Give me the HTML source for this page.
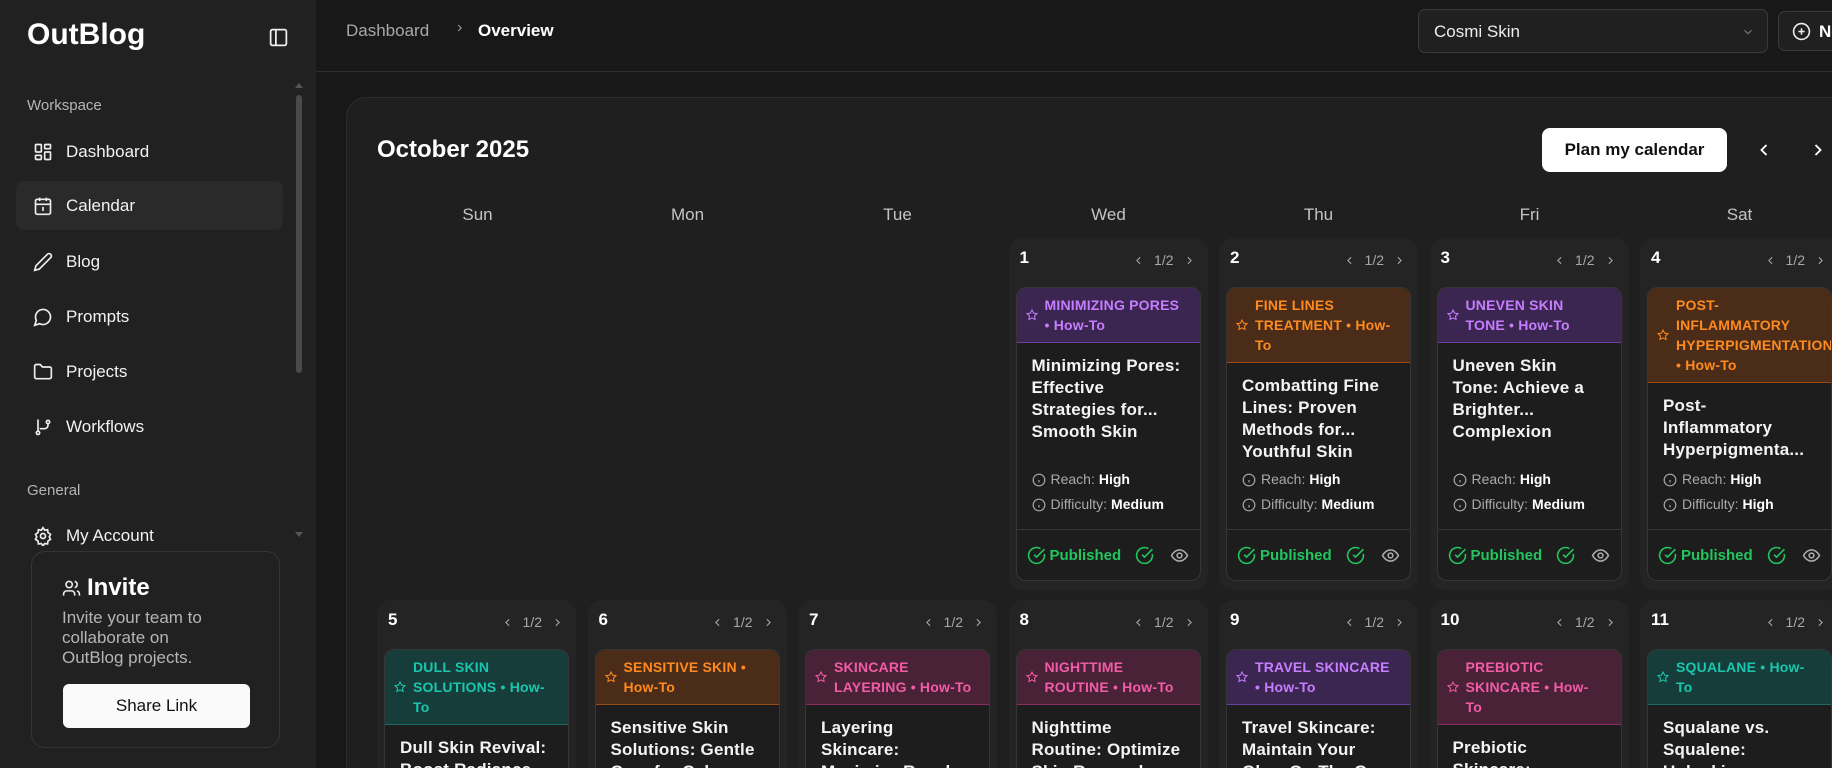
<!DOCTYPE html>
<html><head><meta charset="utf-8"><style>
*{box-sizing:border-box;margin:0;padding:0}
html{width:1832px;height:768px;overflow:hidden}
body{width:1832px;height:768px;overflow:hidden;background:#181818;font-family:"Liberation Sans",sans-serif;color:#fff;position:relative}
.side{position:absolute;left:0;top:0;width:316px;height:768px;background:#212121}
.logo{position:absolute;left:27px;top:18px;font-size:30px;font-weight:700}
.sec{position:absolute;left:27px;font-size:15px;color:#b5b5b5}
.nav{position:absolute;left:16px;width:267px;height:49px;display:flex;align-items:center;padding-left:17px;font-size:17px;color:#f2f2f2}
.nav svg{margin-right:13px}
.nav.act{background:#2a2a2a;border-radius:8px}
.invite{position:absolute;left:31px;top:551px;width:249px;height:197px;border:1px solid #353535;border-radius:14px;background:#212121}
.hdr{position:absolute;left:316px;top:0;right:0;height:72px;border-bottom:1px solid #2e2e2e}
.cal{position:absolute;left:346px;top:97px;width:1520px;height:700px;background:#1f1f1f;border:1px solid #2c2c2c;border-radius:20px}
.dow{position:absolute;top:205px;font-size:17px;color:#c4c4c4;width:199px;text-align:center}
.cell{position:absolute;width:199px;height:352px;background:#242424;border-radius:14px}
.num{position:absolute;left:11px;top:10px;font-size:17px;font-weight:700}
.pg{position:absolute;right:12px;top:14px;font-size:14px;color:#a8a8a8;display:flex;align-items:center;gap:9px}
.card{position:absolute;left:7px;top:49px;width:185px;height:294px;border:1px solid #363636;border-radius:10px;background:#1d1d1d;display:flex;flex-direction:column;overflow:hidden}
.ch{position:relative;padding:7px 0 7px 28px;font-size:14px;line-height:20px;font-weight:700;border-bottom:1px solid;white-space:nowrap;letter-spacing:.2px}
.ch svg{position:absolute;left:9px;top:50%;margin-top:-6px}
.body{flex:1;display:flex;flex-direction:column;justify-content:space-between;padding:12px 0 12px 15px}
.t{font-size:17px;line-height:22px;font-weight:700;color:#f4f4f4;white-space:nowrap;letter-spacing:.2px}
.m{font-size:14px;line-height:25px;color:#aaa;display:flex;align-items:center}
.m b{color:#fff;margin-left:4px}
.m svg{margin-right:5px}
.ft{height:51px;border-top:1px solid #363636;display:flex;align-items:center;padding-left:10px;font-size:15px;font-weight:700;color:#22c55e}
.pu{background:#3b2651;color:#c77dff;border-color:#6b3fa0}
.or{background:#4a2c18;color:#ff8a1f;border-color:#9a4a14}
.te{background:#173d3b;color:#18c7ad;border-color:#1d6a66}
.pk{background:#4a2237;color:#f25ba6;border-color:#8a2d5e}
</style></head><body>
<div class="side">
<div class="logo">OutBlog</div>
<svg style="position:absolute;left:268px;top:27px" width="21" height="21" viewBox="0 0 24 24" fill="none" stroke="#eee" stroke-width="2"><rect x="3" y="3" width="18" height="18" rx="2"/><path d="M9 3v18"/></svg>
<div style="position:absolute;left:296px;top:95px;width:6px;height:278px;background:#4a4a4a;border-radius:3px"></div>
<div style="position:absolute;left:295px;top:79px;border:4px solid transparent;border-bottom:5px solid #555;"></div>
<div style="position:absolute;left:295px;top:532px;border:4px solid transparent;border-top:5px solid #555;"></div>
<div class="sec" style="top:97px">Workspace</div>
<div class="nav" style="top:127px"><svg width="20" height="20" viewBox="0 0 24 24" fill="none" stroke="#eee" stroke-width="2"><rect x="3" y="3" width="7" height="9" rx="1"/><rect x="14" y="3" width="7" height="5" rx="1"/><rect x="14" y="12" width="7" height="9" rx="1"/><rect x="3" y="16" width="7" height="5" rx="1"/></svg>Dashboard</div>
<div class="nav act" style="top:181px"><svg width="20" height="20" viewBox="0 0 24 24" fill="none" stroke="#eee" stroke-width="2"><rect x="3" y="4" width="18" height="18" rx="2"/><path d="M16 2v4M8 2v4M3 10h18M11 14h1v4"/></svg>Calendar</div>
<div class="nav" style="top:237px"><svg width="20" height="20" viewBox="0 0 24 24" fill="none" stroke="#eee" stroke-width="2"><path d="M17 3a2.85 2.85 0 1 1 4 4L7.5 20.5 2 22l1.5-5.5Z"/></svg>Blog</div>
<div class="nav" style="top:292px"><svg width="20" height="20" viewBox="0 0 24 24" fill="none" stroke="#eee" stroke-width="2"><path d="M7.9 20A9 9 0 1 0 4 16.1L2 22Z"/></svg>Prompts</div>
<div class="nav" style="top:347px"><svg width="20" height="20" viewBox="0 0 24 24" fill="none" stroke="#eee" stroke-width="2"><path d="M20 20a2 2 0 0 0 2-2V8a2 2 0 0 0-2-2h-7.9a2 2 0 0 1-1.69-.9L9.6 3.9A2 2 0 0 0 7.93 3H4a2 2 0 0 0-2 2v13a2 2 0 0 0 2 2Z"/></svg>Projects</div>
<div class="nav" style="top:402px"><svg width="20" height="20" viewBox="0 0 24 24" fill="none" stroke="#eee" stroke-width="2"><circle cx="6" cy="19" r="2"/><circle cx="18" cy="6" r="2"/><path d="M6 3v14M18 8v2a4 4 0 0 1-4 4H8"/></svg>Workflows</div>
<div class="sec" style="top:482px">General</div>
<div class="nav" style="top:511px;height:40px;overflow:hidden;align-items:flex-start;padding-top:15px"><svg width="20" height="20" viewBox="0 0 24 24" fill="none" stroke="#eee" stroke-width="2"><circle cx="12" cy="12" r="3"/><path d="M12 2l2 3 3.5-.5.5 3.5 3 2-1.5 3 1.5 3-3 2-.5 3.5-3.5-.5-2 3-2-3-3.5.5-.5-3.5-3-2 1.5-3L3 10l3-2 .5-3.5L10 5Z"/></svg>My Account</div>
<div class="invite">
<svg style="position:absolute;left:30px;top:27px" width="19" height="19" viewBox="0 0 24 24" fill="none" stroke="#eee" stroke-width="2"><path d="M16 21v-2a4 4 0 0 0-4-4H6a4 4 0 0 0-4 4v2"/><circle cx="9" cy="7" r="4"/><path d="M22 21v-2a4 4 0 0 0-3-3.9M16 3.1a4 4 0 0 1 0 7.8"/></svg>
<div style="position:absolute;left:55px;top:22px;font-size:24px;font-weight:700">Invite</div>
<div style="position:absolute;left:30px;top:56px;width:175px;font-size:17px;line-height:20px;color:#b5b5b5">Invite your team to<br>collaborate on<br>OutBlog projects.</div>
<div style="position:absolute;left:31px;top:132px;width:187px;height:44px;background:#fafafa;border-radius:6px;color:#111;font-size:17px;display:flex;align-items:center;justify-content:center">Share Link</div>
</div>
</div>
<div class="hdr">
<div style="position:absolute;left:30px;top:21px;font-size:17px;color:#a8a8a8">Dashboard</div>
<div style="position:absolute;left:141px;top:19px;font-size:16px;color:#999">›</div>
<div style="position:absolute;left:162px;top:21px;font-size:17px;font-weight:700">Overview</div>
<div style="position:absolute;left:1102px;top:9px;width:350px;height:44px;border:1px solid #3a3a3a;border-radius:7px;background:#202020"><span style="position:absolute;left:15px;top:12px;font-size:17px;color:#eee">Cosmi Skin</span><svg style="position:absolute;right:12px;top:15px" width="14" height="14" viewBox="0 0 24 24" fill="none" stroke="#777" stroke-width="2"><path d="m6 9 6 6 6-6"/></svg></div>
<div style="position:absolute;left:1462px;top:11px;width:80px;height:40px;border:1px solid #3a3a3a;border-radius:7px;background:#202020"><svg style="position:absolute;left:13px;top:10px" width="19" height="19" viewBox="0 0 24 24" fill="none" stroke="#eee" stroke-width="2"><circle cx="12" cy="12" r="10"/><path d="M8 12h8M12 8v8"/></svg><span style="position:absolute;left:40px;top:10px;font-size:17px;font-weight:700">New</span></div>
</div>
<div class="cal"></div>
<div style="position:absolute;left:377px;top:136px;font-size:24px;font-weight:700">October 2025</div>
<div style="position:absolute;left:1542px;top:128px;width:185px;height:44px;background:#fff;border-radius:8px;color:#111;font-size:17px;font-weight:700;display:flex;align-items:center;justify-content:center">Plan my calendar</div>
<svg style="position:absolute;left:1754px;top:140px" width="20" height="20" viewBox="0 0 24 24" fill="none" stroke="#fff" stroke-width="2.2"><path d="m15 18-6-6 6-6"/></svg>
<svg style="position:absolute;left:1808px;top:140px" width="20" height="20" viewBox="0 0 24 24" fill="none" stroke="#fff" stroke-width="2.2"><path d="m9 18 6-6-6-6"/></svg>
<div class="dow" style="left:378px">Sun</div><div class="dow" style="left:588px">Mon</div><div class="dow" style="left:798px">Tue</div><div class="dow" style="left:1009px">Wed</div><div class="dow" style="left:1219px">Thu</div><div class="dow" style="left:1430px">Fri</div><div class="dow" style="left:1640px">Sat</div>
<div id="g"></div>
<script>
var star='<svg width="12" height="12" viewBox="0 0 24 24" fill="none" stroke="currentColor" stroke-width="2"><path d="M12 2l3.1 6.3 6.9 1-5 4.9 1.2 6.8L12 17.8 5.8 21l1.2-6.8-5-4.9 6.9-1z"/></svg>';
var info='<svg width="14" height="14" viewBox="0 0 24 24" fill="none" stroke="#aaa" stroke-width="2"><circle cx="12" cy="12" r="10"/><path d="M12 16v-4M12 8h.01"/></svg>';
var chk='<svg width="19" height="19" viewBox="0 0 24 24" fill="none" stroke="#22c55e" stroke-width="2"><path d="M21.8 10A10 10 0 1 1 17 3.3"/><path d="m9 11 3 3L22 4"/></svg>';
var eye='<svg width="19" height="19" viewBox="0 0 24 24" fill="none" stroke="#aaa" stroke-width="2"><path d="M2 12s3.5-7 10-7 10 7 10 7-3.5 7-10 7S2 12 2 12Z"/><circle cx="12" cy="12" r="3"/></svg>';
var lc='<svg width="13" height="13" viewBox="0 0 24 24" fill="none" stroke="#aaa" stroke-width="2"><path d="m15 18-6-6 6-6"/></svg>',rc='<svg width="13" height="13" viewBox="0 0 24 24" fill="none" stroke="#aaa" stroke-width="2"><path d="m9 18 6-6-6-6"/></svg>';
var D=[
[1,3,0,'pu','MINIMIZING PORES<br>• How-To','Minimizing Pores:<br>Effective<br>Strategies for...<br>Smooth Skin','Medium'],
[2,4,0,'or','FINE LINES<br>TREATMENT • How-<br>To','Combatting Fine<br>Lines: Proven<br>Methods for...<br>Youthful Skin','Medium'],
[3,5,0,'pu','UNEVEN SKIN<br>TONE • How-To','Uneven Skin<br>Tone: Achieve a<br>Brighter...<br>Complexion','Medium'],
[4,6,0,'or','POST-<br>INFLAMMATORY<br>HYPERPIGMENTATION<br>• How-To','Post-<br>Inflammatory<br>Hyperpigmenta...','High'],
[5,0,1,'te','DULL SKIN<br>SOLUTIONS • How-<br>To','Dull Skin Revival:<br>Boost Radiance<br>Naturally','Medium'],
[6,1,1,'or','SENSITIVE SKIN •<br>How-To','Sensitive Skin<br>Solutions: Gentle<br>Care for Calm...','Medium'],
[7,2,1,'pk','SKINCARE<br>LAYERING • How-To','Layering<br>Skincare:<br>Maximize Resul...','Medium'],
[8,3,1,'pk','NIGHTTIME<br>ROUTINE • How-To','Nighttime<br>Routine: Optimize<br>Skin Renewal','Medium'],
[9,4,1,'pu','TRAVEL SKINCARE<br>• How-To','Travel Skincare:<br>Maintain Your<br>Glow On The Go','Medium'],
[10,5,1,'pk','PREBIOTIC<br>SKINCARE • How-<br>To','Prebiotic<br>Skincare:<br>Nourish Your...','Medium'],
[11,6,1,'te','SQUALANE • How-<br>To','Squalane vs.<br>Squalene:<br>Unlocking...','Medium']];
var h='';
D.forEach(function(d){var x=377+d[1]*210.5,y=d[2]?600:238;
h+='<div class="cell" style="left:'+x+'px;top:'+y+'px"><div class="num">'+d[0]+'</div><div class="pg">'+lc+'1/2'+rc+'</div><div class="card"><div class="ch '+d[3]+'">'+star+d[4]+'</div><div class="body"><div class="t">'+d[5]+'</div><div><div class="m">'+info+'Reach:<b>High</b></div><div class="m">'+info+'Difficulty:<b>'+d[6]+'</b></div></div></div><div class="ft">'+chk+'<span style="margin:0 14px 0 4px">Published</span>'+chk+'<span style="margin-left:16px;display:flex">'+eye+'</span></div></div></div>';});
document.getElementById('g').innerHTML=h;
</script>
</body></html>
